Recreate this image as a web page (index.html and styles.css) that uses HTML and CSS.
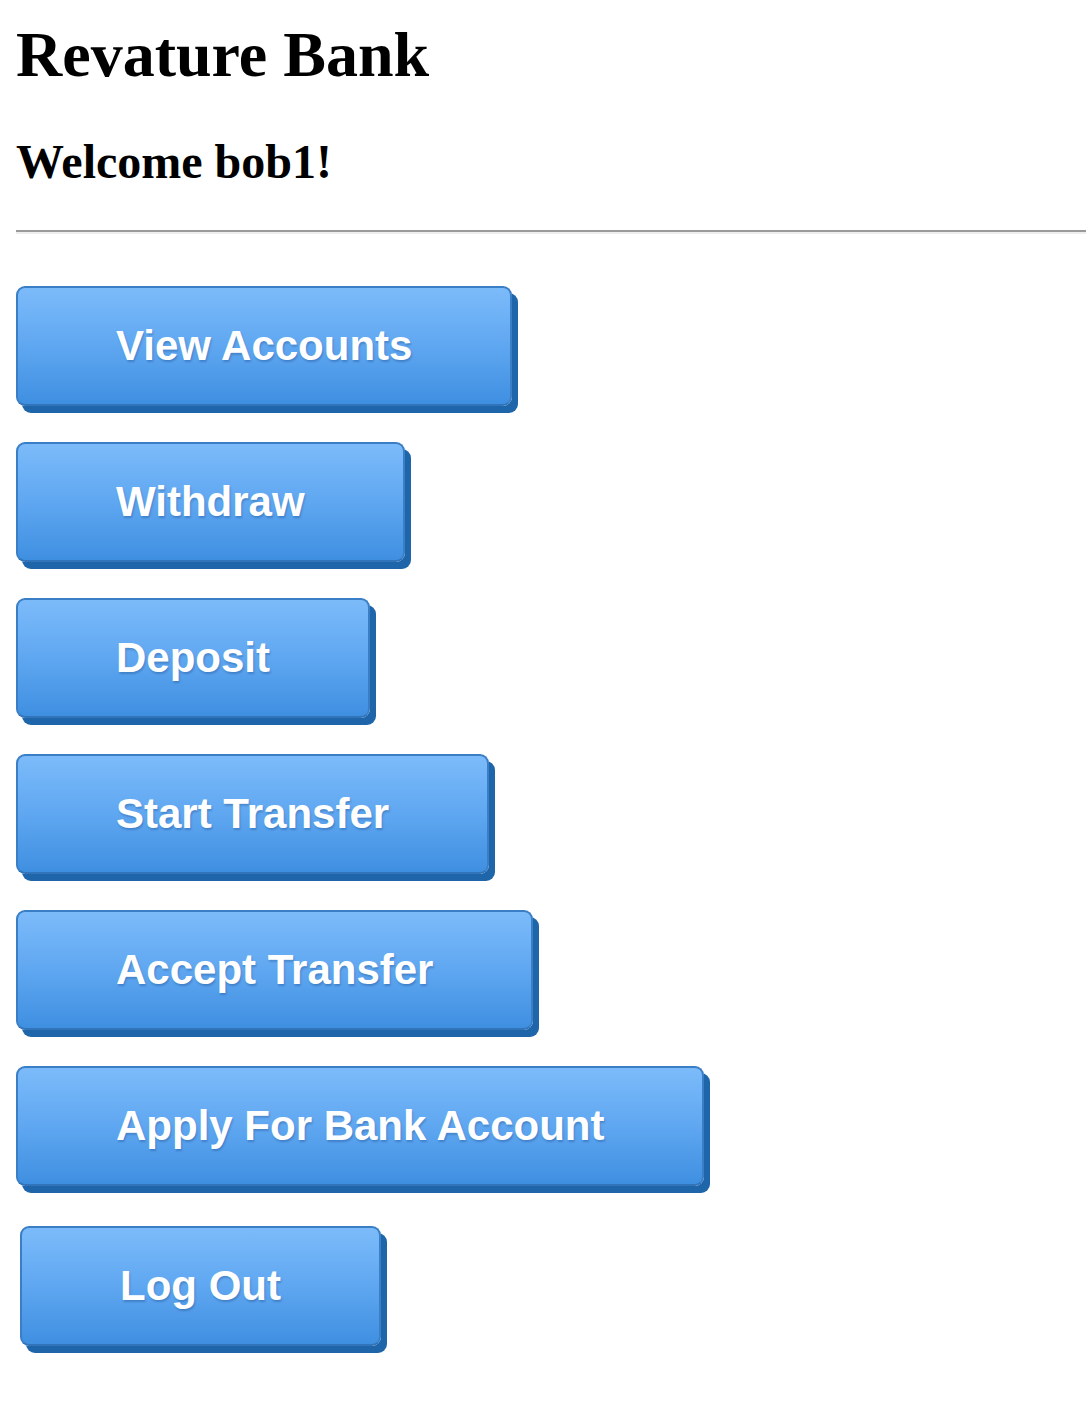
FILE: index.html
```html
<!DOCTYPE html>
<html>
<head>
<meta charset="utf-8">
<title>Revature Bank</title>
<link rel="stylesheet" href="styles.css">
</head>
<body>
<h1 class="title">Revature Bank</h1>
<h2 class="welcome">Welcome bob1!</h2>
<hr class="rule">
<div class="menu">
  <button class="btn">View Accounts</button>
  <button class="btn">Withdraw</button>
  <button class="btn">Deposit</button>
  <button class="btn">Start Transfer</button>
  <button class="btn">Accept Transfer</button>
  <button class="btn">Apply For Bank Account</button>
</div>
<div class="logout">
  <button class="btn">Log Out</button>
</div>
</body>
</html>
```

FILE: styles.css
```css
html, body {
  background: #ffffff;
}
body {
  margin: 0;
  padding: 18px 0 40px 16px;
  font-family: "Liberation Serif", "Times New Roman", serif;
  color: #000;
}
.title {
  font-size: 64px;
  font-weight: bold;
  margin: 0 0 42px 0;
}
.welcome {
  font-size: 48px;
  font-weight: bold;
  margin: 0;
}
.rule {
  margin: 41px 0 0 0;
  height: 0;
  border: none;
  border-top: 2px solid #9a9a9a;
  border-bottom: 2px solid #eeeeee;
}
.menu {
  display: flex;
  flex-direction: column;
  align-items: flex-start;
  gap: 36px;
  margin-top: 52px;
}
.logout {
  display: flex;
  margin: 40px 0 0 4px;
}
.btn {
  box-sizing: border-box;
  height: 120px;
  padding: 0 98px;
  border: 2px solid #3a7ec6;
  border-bottom-color: #3274ba;
  border-radius: 9px;
  background: linear-gradient(to bottom, #7cbbfa 0%, #62a9f2 45%, #3f8fe1 100%);
  box-shadow: 6px 7px 0 #1f65a9;
  color: #ffffff;
  font-family: "Liberation Sans", Arial, Helvetica, sans-serif;
  font-weight: bold;
  font-size: 42px;
  line-height: normal;
  text-shadow: 1px 2px 2px rgba(0, 40, 100, 0.25);
  white-space: nowrap;
  cursor: pointer;
}
```
